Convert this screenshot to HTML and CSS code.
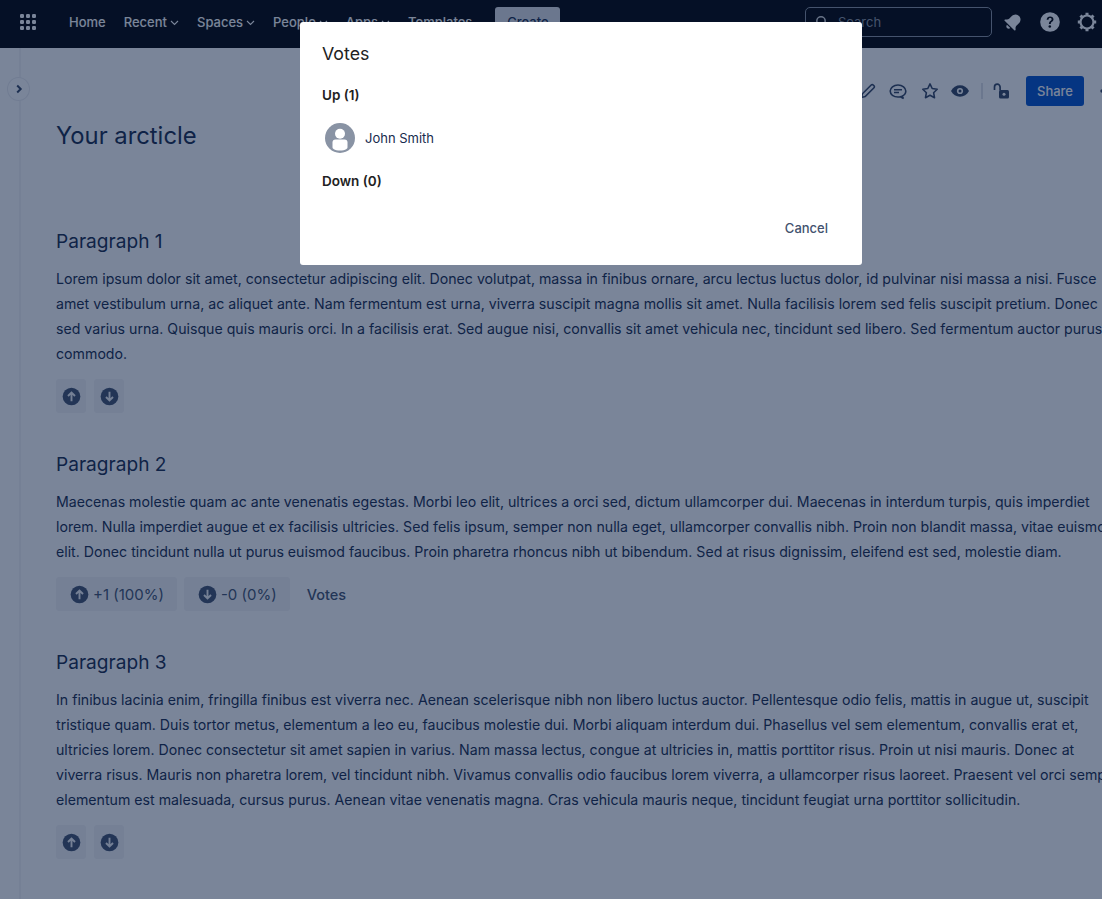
FILE: index.html
```html
<!DOCTYPE html>
<html lang="en">
<head>
<meta charset="utf-8">
<title>Your arcticle</title>
<link rel="stylesheet" href="styles.css">
</head>
<body>
<header class="topbar">
  <svg class="grid-icon" width="18" height="18" viewBox="0 0 18 18"><g fill="#fff"><rect x="1" y="1" width="4" height="4" rx="1.2"/><rect x="7" y="1" width="4" height="4" rx="1.2"/><rect x="13" y="1" width="4" height="4" rx="1.2"/><rect x="1" y="7" width="4" height="4" rx="1.2"/><rect x="7" y="7" width="4" height="4" rx="1.2"/><rect x="13" y="7" width="4" height="4" rx="1.2"/><rect x="1" y="13" width="4" height="4" rx="1.2"/><rect x="7" y="13" width="4" height="4" rx="1.2"/><rect x="13" y="13" width="4" height="4" rx="1.2"/></g></svg>
  <nav class="nav">
    <a class="nav-item">Home</a>
    <a class="nav-item">Recent<svg class="chev" width="9" height="6" viewBox="0 0 9 6"><path d="M1 1l3.5 3.5L8 1" fill="none" stroke="#fff" stroke-width="1.1"/></svg></a>
    <a class="nav-item">Spaces<svg class="chev" width="9" height="6" viewBox="0 0 9 6"><path d="M1 1l3.5 3.5L8 1" fill="none" stroke="#fff" stroke-width="1.1"/></svg></a>
    <a class="nav-item">People<svg class="chev" width="9" height="6" viewBox="0 0 9 6"><path d="M1 1l3.5 3.5L8 1" fill="none" stroke="#fff" stroke-width="1.1"/></svg></a>
    <a class="nav-item">Apps<svg class="chev" width="9" height="6" viewBox="0 0 9 6"><path d="M1 1l3.5 3.5L8 1" fill="none" stroke="#fff" stroke-width="1.1"/></svg></a>
    <a class="nav-item">Templates</a>
    <a class="create">Create</a>
  </nav>
  <div class="search">
    <svg width="14" height="14" viewBox="0 0 14 14"><circle cx="6" cy="6" r="4.2" fill="none" stroke="#fff" stroke-width="1.5"/><path d="M9.2 9.2l3.3 3.3" stroke="#fff" stroke-width="1.5"/></svg>
    <span>Search</span>
  </div>
  <div class="top-icons">
    <svg width="20" height="20" viewBox="0 0 20 20"><g transform="rotate(45 10 10)" fill="#fff"><path d="M10 1.500c3.400 0 5 2.600 5 5.500v3.500c0 1.300 1.400 2.300 2.300 3.100.6.500.3 1.400-.5 1.400H3.200c-.8 0-1.100-.9-.5-1.400.9-.8 2.300-1.800 2.300-3.100V7c0-2.900 1.600-5.500 5-5.500z"/><path d="M7.600 16.200h4.800c-.2 1.400-1.200 2.300-2.400 2.300s-2.200-.9-2.400-2.300z"/></g></svg>
    <svg width="20" height="20" viewBox="0 0 20 20"><circle cx="10" cy="10" r="9.800" fill="#fff"/><path d="M6.600 7.700c.2-2.100 1.600-3.300 3.500-3.300 2 0 3.400 1.200 3.400 2.900 0 2.400-2.700 2.400-2.700 4.600H8.900c0-3.100 2.700-3.200 2.700-4.500 0-.8-.6-1.300-1.500-1.300-1 0-1.500.6-1.600 1.600z" fill="#000206"/><circle cx="9.800" cy="14.500" r="1.300" fill="#000206"/></svg>
    <svg width="20" height="20" viewBox="0 0 20 20"><circle cx="10" cy="10" r="6.500" fill="none" stroke="#fff" stroke-width="2.200"/><g stroke="#fff" stroke-width="3"><path d="M10 .8v3M10 16.200v3M.8 10h3M16.200 10h3M3.500 3.500l2.100 2.100M14.400 14.400l2.100 2.100M3.500 16.500l2.100-2.100M14.400 5.600l2.100-2.100"/></g></svg>
  </div>
</header>

<div class="layout">
  <aside class="rail">
    <button class="rail-toggle"><svg width="8" height="10" viewBox="0 0 8 10"><path d="M2.200 1.500L5.700 5 2.200 8.500" fill="none" stroke="#344563" stroke-width="2"/></svg></button>
  </aside>
  <main class="content">
    <div class="toolbar">
      <svg width="18" height="18" viewBox="0 0 18 18"><path d="M2.500 15.500l.9-3.700L12.200 3a1.400 1.400 0 0 1 2 0l.8.8a1.400 1.400 0 0 1 0 2l-8.800 8.800z" fill="none" stroke="#344563" stroke-width="1.600"/></svg>
      <svg class="tool-comment" width="18" height="18" viewBox="0 0 18 18"><path d="M13 14.300c2.300-1 3.800-2.900 3.800-5.200C16.800 5.700 13.400 3 9 3S1.200 5.700 1.200 9.100 4.600 15 9 15c.9 0 1.700-.1 2.500-.3l3 1.800z" fill="none" stroke="#344563" stroke-width="1.600"/><path d="M5 7.800h8M5 10.500h5" stroke="#344563" stroke-width="1.600"/></svg>
      <svg width="18" height="18" viewBox="0 0 18 18"><path d="M9 1.900l2.200 4.600 5 .7-3.600 3.500.9 5L9 13.300l-4.500 2.400.9-5-3.600-3.500 5-.7z" fill="none" stroke="#344563" stroke-width="1.600" stroke-linejoin="round"/></svg>
      <svg width="18" height="18" viewBox="0 0 18 18"><path d="M0 9c2-3.700 5.200-5.700 9-5.700s7 2 9 5.700c-2 3.700-5.200 5.700-9 5.700S2 12.700 0 9z" fill="#344563"/><circle cx="9" cy="9" r="3.100" fill="#fff"/><circle cx="9" cy="9" r="1.500" fill="#344563"/></svg>
      <span class="tool-sep"></span>
      <svg class="tool-lock" width="18" height="18" viewBox="0 0 18 18"><path d="M1.500 8V5a2.800 2.800 0 0 1 5.600 0v3.500" fill="none" stroke="#344563" stroke-width="1.700"/><rect x="6" y="8" width="10" height="8.500" rx="1.500" fill="#344563"/><circle cx="11" cy="12.200" r="1.500" fill="#fff"/></svg>
      <a class="share">Share</a>
      <svg class="more" width="20" height="4" viewBox="0 0 20 4"><circle cx="2" cy="2" r="1.700" fill="#344563"/><circle cx="8" cy="2" r="1.700" fill="#344563"/><circle cx="14" cy="2" r="1.700" fill="#344563"/></svg>
    </div>
    <h1 class="page-title">Your arcticle</h1>

    <section class="para">
      <h2>Paragraph 1</h2>
      <p>Lorem ipsum dolor sit amet, consectetur adipiscing elit. Donec volutpat, massa in finibus ornare, arcu lectus luctus dolor, id pulvinar nisi massa a nisi. Fusce<br>amet vestibulum urna, ac aliquet ante. Nam fermentum est urna, viverra suscipit magna mollis sit amet. Nulla facilisis lorem sed felis suscipit pretium. Donec<br>sed varius urna. Quisque quis mauris orci. In a facilisis erat. Sed augue nisi, convallis sit amet vehicula nec, tincidunt sed libero. Sed fermentum auctor purus<br>commodo.</p>
      <div class="votes">
        <button class="vote"><svg class="vote-icon" viewBox="0 0 20 20"><circle cx="10" cy="10" r="9.300"/><path d="M10 15V6M6.300 9.500L10 5.800l3.700 3.700"/></svg></button>
        <button class="vote"><svg class="vote-icon" viewBox="0 0 20 20"><circle cx="10" cy="10" r="9.300"/><path d="M10 5v9M6.300 10.500L10 14.200l3.700-3.700"/></svg></button>
      </div>
    </section>

    <section class="para">
      <h2>Paragraph 2</h2>
      <p>Maecenas molestie quam ac ante venenatis egestas. Morbi leo elit, ultrices a orci sed, dictum ullamcorper dui. Maecenas in interdum turpis, quis imperdiet<br>lorem. Nulla imperdiet augue et ex facilisis ultricies. Sed felis ipsum, semper non nulla eget, ullamcorper convallis nibh. Proin non blandit massa, vitae euismod<br>elit. Donec tincidunt nulla ut purus euismod faucibus. Proin pharetra rhoncus nibh ut bibendum. Sed at risus dignissim, eleifend est sed, molestie diam.</p>
      <div class="votes">
        <button class="vote vote-count"><svg class="vote-icon" viewBox="0 0 20 20"><circle cx="10" cy="10" r="9.300"/><path d="M10 15V6M6.300 9.500L10 5.800l3.700 3.700"/></svg>+1 (100%)</button>
        <button class="vote vote-count"><svg class="vote-icon" viewBox="0 0 20 20"><circle cx="10" cy="10" r="9.300"/><path d="M10 5v9M6.300 10.500L10 14.200l3.700-3.700"/></svg>-0 (0%)</button>
        <a class="votes-link">Votes</a>
      </div>
    </section>

    <section class="para">
      <h2>Paragraph 3</h2>
      <p>In finibus lacinia enim, fringilla finibus est viverra nec. Aenean scelerisque nibh non libero luctus auctor. Pellentesque odio felis, mattis in augue ut, suscipit<br>tristique quam. Duis tortor metus, elementum a leo eu, faucibus molestie dui. Morbi aliquam interdum dui. Phasellus vel sem elementum, convallis erat et,<br>ultricies lorem. Donec consectetur sit amet sapien in varius. Nam massa lectus, congue at ultricies in, mattis porttitor risus. Proin ut nisi mauris. Donec at<br>viverra risus. Mauris non pharetra lorem, vel tincidunt nibh. Vivamus convallis odio faucibus lorem viverra, a ullamcorper risus laoreet. Praesent vel orci semper,<br>elementum est malesuada, cursus purus. Aenean vitae venenatis magna. Cras vehicula mauris neque, tincidunt feugiat urna porttitor sollicitudin.</p>
      <div class="votes">
        <button class="vote"><svg class="vote-icon" viewBox="0 0 20 20"><circle cx="10" cy="10" r="9.300"/><path d="M10 15V6M6.300 9.500L10 5.800l3.700 3.700"/></svg></button>
        <button class="vote"><svg class="vote-icon" viewBox="0 0 20 20"><circle cx="10" cy="10" r="9.300"/><path d="M10 5v9M6.300 10.500L10 14.200l3.700-3.700"/></svg></button>
      </div>
    </section>
  </main>
</div>

<div class="overlay"></div>
<div class="modal">
  <h3 class="modal-title">Votes</h3>
  <h4 class="modal-sub">Up (1)</h4>
  <div class="voter">
    <svg class="avatar" width="30" height="30" viewBox="0 0 30 30"><circle cx="15" cy="15" r="15" fill="#8993a4"/><circle cx="15" cy="10.700" r="5" fill="#fff"/><path d="M7.500 19.500a3 3 0 0 1 3-3h9a3 3 0 0 1 3 3v4.500c0 1-.3 1.500-1 2-1.700 1-3.900 1.500-6.500 1.500s-4.800-.5-6.500-1.500c-.7-.5-1-1-1-2z" fill="#fff"/></svg>
    <span>John Smith</span>
  </div>
  <h4 class="modal-sub">Down (0)</h4>
  <div class="modal-foot"><a class="cancel">Cancel</a></div>
</div>
</body>
</html>
```
FILE: styles.css
```css
* { box-sizing: border-box; }
html, body { height: 100%; }
body {
  margin: 0;
  width: 1102px;
  height: 899px;
  overflow: hidden;
  background: #fff;
  color: #172b4d;
  font-family: Inter, "Liberation Sans", sans-serif;
  font-size: 14.17px;
  line-height: 25px;
}
button { font: inherit; color: inherit; border: 0; }
.topbar {
  height: 48px;
  background: #000206;
  color: #fff;
  display: flex;
  align-items: center;
  padding: 0 0 4px 19px;
}
.grid-icon { flex: none; }
.nav { display: flex; align-items: center; margin-left: 32px; font-weight: 500; font-size: 13px; }
.nav-item { display: flex; align-items: center; margin-right: 18px; white-space: nowrap; }
.chev { margin-left: 3px; margin-top: 2px; }
.create {
  background: #dfe1e6;
  color: #172b4d;
  width: 65px;
  height: 30px;
  border-radius: 3px;
  margin-left: 5px;
  display: flex;
  align-items: center;
  justify-content: center;
}
.search {
  margin-left: auto;
  width: 187px;
  height: 30px;
  border: 1px solid #a6adba;
  border-radius: 5px;
  display: flex;
  align-items: center;
  gap: 9px;
  padding-left: 9px;
  opacity: .85;
}
.search span { color: #a6adba; font-size: 13px; }
.top-icons { display: flex; gap: 17px; align-items: center; margin-left: 11px; margin-right: 5px; }
.layout { display: flex; height: 851px; }
.rail { width: 21px; flex: none; border-right: 2px solid #f4f5f7; position: relative; }
.rail-toggle {
  position: absolute;
  left: 7px;
  top: 29px;
  width: 23px;
  height: 24px;
  border-radius: 50%;
  background: #fff;
  border: 1px solid #ebecf0;
  padding: 0;
  display: flex;
  align-items: center;
  justify-content: center;
}
.content { padding: 0 0 0 35px; flex: 1; min-width: 0; white-space: nowrap; }
.toolbar {
  height: 32px;
  margin-top: 27px;
  display: flex;
  align-items: center;
  justify-content: flex-end;
  gap: 12px;
  margin-right: -18px;
}
.tool-comment { margin-right: 2px; }
.tool-lock { margin-left: -2px; }
.tool-sep { width: 2px; height: 16px; background: #dfe1e6; }
.share {
  background: #0052cc;
  color: #fff;
  font-weight: 500;
  font-size: 13px;
  width: 58px;
  height: 30px;
  border-radius: 3px;
  display: flex;
  align-items: center;
  justify-content: center;
  margin-left: 3px;
}
.more { margin-left: 4px; }
.page-title { font-size: 23.8px; font-weight: 400; line-height: 32px; margin: 13px 0 0; }
.para h2 { font-size: 19.1px; font-weight: 400; line-height: 26px; margin: 76px 0 0; }
.para + .para h2 { margin-top: 38px; }
.para p { margin: 12px 0 0; }
.votes { display: flex; align-items: center; gap: 8px; margin-top: 13px; height: 34px; }
.vote {
  background: #f4f5f7;
  width: 30px;
  height: 34px;
  border-radius: 3px;
  padding: 0;
  display: flex;
  align-items: center;
  justify-content: center;
}
.vote-count { width: auto; padding: 0 13px 0 14px; gap: 4px; font-size: 15px; color: #42526e; }
.vote-count + .vote-count { margin-left: -1px; }
.vote-icon { width: 19px; height: 19px; flex: none; }
.vote-icon circle { fill: #42526e; }
.vote-icon path { fill: none; stroke: #f4f5f7; stroke-width: 2; }
.votes-link { margin-left: 9px; font-size: 14.5px; font-weight: 500; color: #42526e; }
.overlay { position: fixed; inset: 0; background: rgba(9, 30, 66, .54); }
.modal {
  position: fixed;
  left: 300px;
  top: 22px;
  width: 562px;
  height: 243px;
  background: #fff;
  border-radius: 3px;
  padding: 19px 22px;
  color: #172b4d;
}
.modal-title { margin: 0; font-size: 17.8px; font-weight: 400; color: #222; line-height: 25px; }
.modal-sub { margin: 19px 0 0; font-size: 13.5px; font-weight: 600; color: #222; line-height: 20px; }
.voter { display: flex; align-items: center; gap: 10px; margin: 18px 0 0 3px; height: 30px; font-size: 13px; }
.avatar { flex: none; }
.voter + .modal-sub { margin-top: 18px; }
.modal-foot { display: flex; justify-content: flex-end; margin-top: 25px; padding-right: 12px; }
.cancel { font-weight: 500; color: #42526e; font-size: 13px; }
```
